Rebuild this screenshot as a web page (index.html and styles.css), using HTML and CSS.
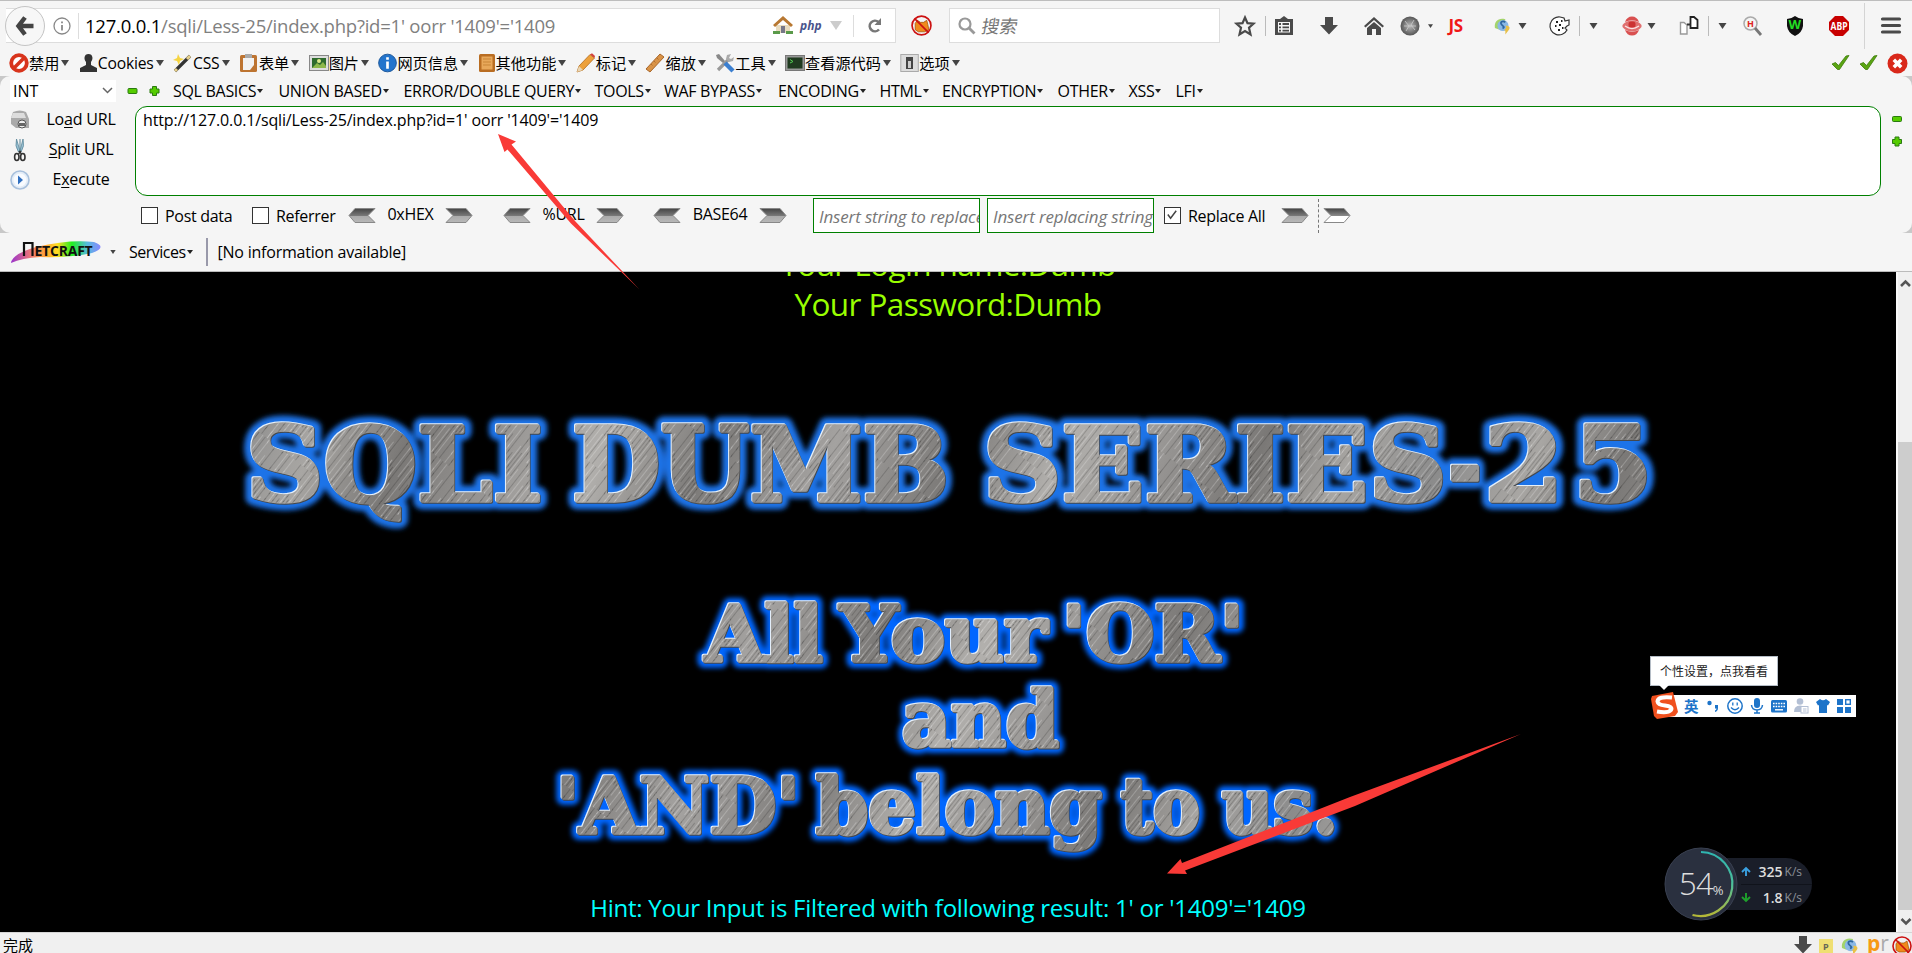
FILE: index.html
```
<!DOCTYPE html>
<html lang="zh-CN">
<head>
<meta charset="utf-8">
<title>Less-25</title>
<link rel="stylesheet" href="styles.css">
</head>
<body>
<svg class="defs" width="0" height="0">
  <defs>
    <linearGradient id="gArrow" x1="0" y1="0" x2="0" y2="1"><stop offset="0" stop-color="#444"/><stop offset=".5" stop-color="#777"/><stop offset=".55" stop-color="#aaa"/><stop offset="1" stop-color="#b8b8b8"/></linearGradient>
    <linearGradient id="gArrowW" x1="0" y1="0" x2="0" y2="1"><stop offset="0" stop-color="#444"/><stop offset=".5" stop-color="#888"/><stop offset=".55" stop-color="#fff"/><stop offset="1" stop-color="#fff"/></linearGradient>
    <radialGradient id="gBall"><stop offset="0" stop-color="#bbb"/><stop offset="1" stop-color="#555"/></radialGradient>
    <symbol id="right" viewBox="0 0 28 15"><path d="M1 .5H21L27 7.5L21 14.500H1L8 7.500Z" fill="url(#gArrow)" stroke="#888"/></symbol>
    <symbol id="left" viewBox="0 0 28 15"><path d="M27 .5H7L1 7.500L7 14.500H27L20 7.500Z" fill="url(#gArrow)" stroke="#888"/></symbol>
    <symbol id="rightw" viewBox="0 0 28 15"><path d="M1 .5H21L27 7.500L21 14.500H1L8 7.500Z" fill="url(#gArrowW)" stroke="#888"/></symbol>
    <symbol id="minus" viewBox="0 0 10 10"><rect x=".5" y="2.500" width="9" height="5" rx="1" fill="#5c0" stroke="#2a7a10"/></symbol>
    <symbol id="plus" viewBox="0 0 10 10"><path d="M3 .5H7V3H9.500V7H7V9.500H3V7H.5V3H3Z" fill="#5c0" stroke="#2a7a10"/></symbol>
    <symbol id="tri" viewBox="0 0 8 6"><path d="M0 0H8L4 6Z" fill="#444"/></symbol>
    <symbol id="tick" viewBox="0 0 18 18"><path d="M.5 10L4 8.500L7 11.500L14.500 2L17.500 1.500L8 15.500H6Z" fill="#5aa512" stroke="#3c7a0a" stroke-width=".8"/></symbol>
    <symbol id="fox" viewBox="0 0 20 20"><path d="M4 8L6 5L9 7H12L15 5L16 9L17 14L13 16H7L4 14Z" fill="#f08a1c" stroke="#a05008" stroke-width=".7"/><circle cx="10" cy="10" r="9" fill="none" stroke="#c11" stroke-width="1.600"/><path d="M3.500 3.500L16.500 16.500" stroke="#c11" stroke-width="1.600"/></symbol>
    <symbol id="swirl" viewBox="0 0 20 20"><path d="M2 12C1 5 6 1 13 3L12 8L8 6C5 8 5 11 7 14Z" fill="#a4d46c"/><circle cx="10.500" cy="9.500" r="5.800" fill="#8ab8e6"/><path d="M13 6C10 4 7 6 9 8.500S13 11 10 12.500" fill="none" stroke="#2f679f" stroke-width="1.800"/><path d="M13 10C17 9 19 12 16 15L13 19V15C10 14 16 13 13 10Z" fill="#e8c048"/></symbol>
    <symbol id="down" viewBox="0 0 18 18"><path d="M5 0H13V8H18L9 17.500L0 8H5Z" fill="#4a4a4a"/></symbol>
    <linearGradient id="metal" gradientUnits="userSpaceOnUse" x1="240" y1="400" x2="760" y2="620" spreadMethod="reflect"><stop offset="0" stop-color="#8b8b8b"/><stop offset=".15" stop-color="#a8a6a3"/><stop offset=".3" stop-color="#7a7876"/><stop offset=".48" stop-color="#9b9997"/><stop offset=".62" stop-color="#b2b0ad"/><stop offset=".8" stop-color="#7d7b79"/><stop offset="1" stop-color="#a4a2a0"/></linearGradient>
    <pattern id="brush" width="90" height="31" patternUnits="userSpaceOnUse" patternTransform="rotate(-52)">
      <path d="M0 2.500H60M20 9.500H90M0 14.500H40M50 17.500H90M10 23.500H75M0 28.500H30" stroke="#fff" stroke-opacity=".22"/>
      <path d="M30 4.500H90M0 7.500H55M30 12.500H90M0 19.500H65M40 26.500H90M0 30.500H50" stroke="#000" stroke-opacity=".17"/>
    </pattern>
    <filter id="glow" x="-5%" y="-15%" width="110%" height="130%"><feGaussianBlur stdDeviation="2.600"/></filter>
  </defs>
</svg>

<header class="nav">
  <div class="urlbar">
    <button class="back"><svg width="18" height="20" viewBox="0 0 18 20"><path d="M9 1.500L2.500 10L9 18.500M3 10H17.500" fill="none" stroke="#444" stroke-width="4.500"/></svg></button>
    <svg class="info" width="18" height="18" viewBox="0 0 18 18"><circle cx="9" cy="9" r="8" fill="none" stroke="#888" stroke-width="1.300"/><path d="M9 8V13.500M9 4.500V6.200" stroke="#888" stroke-width="1.800"/></svg>
    <div class="url"><b>127.0.0.1</b>/sqli/Less-25/index.php?id=1' oorr '1409'='1409</div>
    <svg width="20" height="19" viewBox="0 0 20 19"><path d="M3 9H17V17H3Z" fill="#e9dcc0"/><path d="M0 9L10 0L20 9L18 11L10 4L2 11Z" fill="#b87832"/><rect x="8" y="10" width="4" height="7" fill="#778"/><path d="M0 15H7V18H0ZM13 15H20V18H13Z" fill="#5a9a4a"/></svg>
    <span class="php">php</span>
    <svg class="drop" width="12" height="9" viewBox="0 0 12 9"><path d="M0 0H12L6 9Z" fill="#ccc"/></svg>
    <span class="reload"><svg width="15" height="16" viewBox="0 0 15 16"><path d="M11.500 4A5.300 5.300 0 1 0 12 11.500" fill="none" stroke="#777" stroke-width="2.600"/><path d="M14 0V7H7.500Z" fill="#777"/></svg></span>
  </div>
  <svg class="fox" width="21" height="21"><use href="#fox"/></svg>
  <div class="search"><svg width="18" height="18" viewBox="0 0 18 18"><circle cx="7" cy="7" r="5.500" fill="none" stroke="#999" stroke-width="2.200"/><path d="M11 11L16.500 16.500" stroke="#999" stroke-width="2.800"/></svg><i>搜索</i></div>
  <div class="tools">
    <svg width="22" height="22" viewBox="0 0 22 22"><path d="M11 2.500L13.500 8.200L19.500 8.700L15 12.700L16.500 19.500L11 16L5.500 19.500L7 12.700L2.500 8.700L8.500 8.200Z" fill="none" stroke="#4a4a4a" stroke-width="2.200"/></svg>
    <span class="vline m9"></span>
    <svg class="m8" width="20" height="20" viewBox="0 0 20 20"><path d="M1 3H6L10 0L14 3H19V19H1Z" fill="#4a4a4a"/><path d="M4 6H16V16.500H4Z" fill="#f5f5f5"/><path d="M5 8H7M8.500 8H15M5 11.300H7M8.500 11.300H15M5 14.600H7M8.500 14.600H15" stroke="#4a4a4a" stroke-width="1.800"/></svg>
    <svg class="m26" width="18" height="18"><use href="#down"/></svg>
    <svg class="m26" width="20" height="18" viewBox="0 0 20 18"><path d="M0 9L10 0L20 9L18.500 10.500L10 3L1.500 10.500Z" fill="#4a4a4a"/><path d="M3 11L10 5L17 11V18H12V12H8V18H3Z" fill="#4a4a4a"/></svg>
    <svg class="m16" width="20" height="20" viewBox="0 0 20 20"><circle cx="10" cy="10" r="9.500" fill="url(#gBall)"/><path d="M5 5L9 10L6 15M14 4L11 9L15 14M4 10H16" stroke="#ccc" stroke-width=".8" fill="none"/></svg>
    <svg class="m7" width="5" height="4"><use href="#tri"/></svg>
    <b class="js m16">JS</b>
    <svg class="m24" width="19" height="20"><use href="#swirl"/></svg>
    <svg class="m6" width="9" height="6"><use href="#tri"/></svg>
    <svg class="m23" width="20" height="20" viewBox="0 0 20 20"><path d="M10 1A9 9 0 1 0 17 14L15 12L17 10L19 9V4L15 5L14 2Z" fill="#fff" stroke="#333" stroke-width="1.200"/><path d="M6 6H8M11 5H12.500M5 10H6.500M9 9H11M12 12H13.500M8 14H10" stroke="#222" stroke-width="2"/></svg>
    <span class="vline m9"></span>
    <svg class="m9" width="9" height="6"><use href="#tri"/></svg>
    <svg class="m24" width="20" height="20" viewBox="0 0 20 20"><path d="M3 6Q5 .5 10 .5T17 6Q10 2.500 3 6ZM3 14Q5 19.500 10 19.500T17 14Q10 17.500 3 14Z" fill="#d95050"/><path d="M.5 9Q4 4.500 10 4.500T19.500 9V11Q16 15.500 10 15.500T.5 11Z" fill="#e07070"/><path d="M3 10Q10 15 17 10" fill="none" stroke="#fbe4e4" stroke-width="1.300"/><rect x="6.500" y="5.500" width="7" height="6" rx="2.500" fill="#c33"/></svg>
    <svg class="m5" width="9" height="6"><use href="#tri"/></svg>
    <svg class="m23" width="20" height="19" viewBox="0 0 20 19"><path d="M1.500 6.500H5L8 9V18H1.500Z" fill="#fff" stroke="#999" stroke-width="1.400"/><path d="M11.500 1H15L18.500 4V12H11.500Z" fill="#fff" stroke="#222" stroke-width="1.800"/><path d="M8 8.500H11.500" stroke="#333" stroke-width="2"/></svg>
    <span class="vline m9"></span>
    <svg class="m9" width="9" height="6"><use href="#tri"/></svg>
    <svg class="m16" width="19" height="20" viewBox="0 0 19 20"><circle cx="7.500" cy="7.500" r="6.500" fill="#f4f4f4" stroke="#aaa" stroke-width="1.500"/><path d="M12 12L18 19" stroke="#777" stroke-width="2.800"/><text x="4" y="11" class="hh">H</text></svg>
    <svg class="m24" width="18" height="20" viewBox="0 0 18 20"><path d="M1 3Q5 3 9 0Q13 3 17 3V10Q16 17 9 20Q2 17 1 10Z" fill="#111"/><text x="2.500" y="13" class="ww">W</text></svg>
    <svg class="m25" width="20" height="20" viewBox="0 0 20 20"><path d="M6 0H14L20 6V14L14 20H6L0 14V6Z" fill="#c80000"/><text x="1.500" y="13.800" class="abp" textLength="17" lengthAdjust="spacingAndGlyphs">ABP</text></svg>
    <span class="vlong m15"></span>
    <svg class="m16" width="20" height="17" viewBox="0 0 20 17"><path d="M1.500 2H18.500M1.500 8.500H18.500M1.500 15H18.500" stroke="#4a4a4a" stroke-width="3.200" stroke-linecap="round"/></svg>
  </div>
</header>

<div class="webdev">
  <div class="wd"><svg width="20" height="20" viewBox="0 0 20 20"><circle cx="10" cy="10" r="7.800" fill="#fff" stroke="#d8341c" stroke-width="3.800"/><path d="M4.500 15.500L15.500 4.500" stroke="#d8341c" stroke-width="3.500"/></svg><span>禁用</span><svg class="t"><use href="#tri"/></svg></div>
  <div class="wd"><svg width="19" height="20" viewBox="0 0 19 20"><path d="M9.500 1C14 1 14.500 6 12 9V12L18 15V19H1V15L7 12V9C4.500 6 5 1 9.500 1Z" fill="#333"/></svg><span class="lat">Cookies</span><svg class="t"><use href="#tri"/></svg></div>
  <div class="wd"><svg width="20" height="20" viewBox="0 0 20 20"><path d="M5 1L7 5L11 6L7 8L6 12L4 8L0 7L4 5Z" fill="#f5d442"/><path d="M2 18L17 3" stroke="#333" stroke-width="3.200"/><path d="M14 6L17 3M2 18L4 16" stroke="#e6cf8a" stroke-width="3"/></svg><span class="lat">CSS</span><svg class="t"><use href="#tri"/></svg></div>
  <div class="wd"><svg width="20" height="20" viewBox="0 0 20 20"><rect x="1" y="2" width="17" height="17" rx="1.500" fill="#bd7431"/><path d="M4 5H15V12L11 17H4Z" fill="#f2f2f2"/><rect x="6" y="1" width="7" height="4" fill="#aaa"/></svg><span>表单</span><svg class="t"><use href="#tri"/></svg></div>
  <div class="wd"><svg width="20" height="20" viewBox="0 0 20 20"><rect x=".5" y="2.500" width="19" height="15" fill="#ddd" stroke="#888"/><rect x="3" y="5" width="14" height="10" fill="#2e6b2d"/><path d="M3 15L8 10L11 12L14 9L17 13V15Z" fill="#8db84a"/><circle cx="10" cy="8" r="2" fill="#dce88a"/></svg><span>图片</span><svg class="t"><use href="#tri"/></svg></div>
  <div class="wd"><svg width="19" height="20" viewBox="0 0 20 20"><circle cx="10" cy="10" r="9.300" fill="#2374cc" stroke="#1a5599"/><path d="M10 8.500V16M10 4V6.600" stroke="#fff" stroke-width="2.800"/></svg><span>网页信息</span><svg class="t"><use href="#tri"/></svg></div>
  <div class="wd"><svg width="18" height="20" viewBox="0 0 18 20"><rect x="1" y="1" width="16" height="18" rx="1.500" fill="#b96d22"/><rect x="3.500" y="3.500" width="11" height="13" fill="#e8a85a"/><path d="M5 6H13M5 9H13M5 12H13" stroke="#c98536"/></svg><span>其他功能</span><svg class="t"><use href="#tri"/></svg></div>
  <div class="wd"><svg width="20" height="20" viewBox="0 0 20 20"><path d="M1 19L3 13L14 1.500L18.500 5L7 17Z" fill="#eda13c" stroke="#b36b1d" stroke-width=".8"/><path d="M14 1.500L16 .3L19 3L18.500 5Z" fill="#d3423e"/><path d="M1 19L3 13L7 17Z" fill="#e9d6b4"/></svg><span>标记</span><svg class="t"><use href="#tri"/></svg></div>
  <div class="wd"><svg width="20" height="20" viewBox="0 0 20 20"><path d="M1 16L15 1L19 4L5 19Z" fill="#d99347" stroke="#a8662a"/><path d="M6 11L7.500 12.500M9 8L10.500 9.500M12 5L13.500 6.500" stroke="#a8662a" stroke-width=".8"/></svg><span>缩放</span><svg class="t"><use href="#tri"/></svg></div>
  <div class="wd"><svg width="20" height="20" viewBox="0 0 20 20"><path d="M3 17L14 6" stroke="#999" stroke-width="3.200"/><path d="M12 2L16 1L14 5L16 6L19 4L18 8L14 9L11 6Z" fill="#aaa"/><path d="M1 2L4 1L10 8L8 10L2 5Z" fill="#888"/><path d="M10 10L18 18" stroke="#3b7fd0" stroke-width="4.500"/></svg><span>工具</span><svg class="t"><use href="#tri"/></svg></div>
  <div class="wd"><svg width="20" height="20" viewBox="0 0 20 20"><rect x=".5" y="2.500" width="19" height="15" fill="#999" stroke="#777"/><rect x="2.500" y="4.500" width="15" height="11" fill="#1f3a1f"/><path d="M5 6.500L8 8.500L5 10" stroke="#5c5" fill="none"/></svg><span>查看源代码</span><svg class="t"><use href="#tri"/></svg></div>
  <div class="wd"><svg width="19" height="20" viewBox="0 0 19 20"><rect x=".8" y="1.500" width="17.500" height="17" fill="#ddd" stroke="#aaa"/><rect x="6" y="4" width="7" height="12" fill="#444"/><path d="M8 15V8H11V15Z" fill="#ccc"/></svg><span>选项</span><svg class="t"><use href="#tri"/></svg></div>
  <div class="marks"><svg width="19" height="18"><use href="#tick"/></svg><svg width="19" height="18"><use href="#tick"/></svg><svg width="21" height="21" viewBox="0 0 20 20"><circle cx="10" cy="10" r="9.500" fill="#d9281a"/><path d="M6.500 6.500L13.500 13.500M13.500 6.500L6.500 13.500" stroke="#fff" stroke-width="3.400"/></svg></div>
</div>

<div class="hackwrap">
<section class="hackbar">
  <div class="hmenu">
    <div class="sel"><span>INT</span><svg width="11" height="7" viewBox="0 0 11 7"><path d="M1 1L5.500 5.500L10 1" fill="none" stroke="#666" stroke-width="1.500"/></svg></div>
    <svg width="11" height="10"><use href="#minus"/></svg>
    <svg width="11" height="10"><use href="#plus"/></svg>
    <ul>
      <li>SQL BASICS</li><li>UNION BASED</li><li>ERROR/DOUBLE QUERY</li><li>TOOLS</li><li>WAF BYPASS</li><li>ENCODING</li><li>HTML</li><li>ENCRYPTION</li><li>OTHER</li><li>XSS</li><li>LFI</li>
    </ul>
  </div>
  <div class="hbody">
    <div class="acts">
      <div><svg width="20" height="20" viewBox="0 0 20 20"><path d="M3 2Q10 -1 16 2L19 9V18H6L1 14V8Z" fill="#aaa"/><path d="M3 3H14L16 8H1Z" fill="#ddd"/><circle cx="12" cy="14" r="4" fill="#eee" stroke="#555"/><path d="M9 13H15V16H9Z" fill="#666"/></svg><span>Lo<u>a</u>d URL</span></div>
      <div><svg width="20" height="24" viewBox="0 0 20 24"><path d="M6.500 1Q4.500 8 8.500 14H11Q15 8 13 1L10 13Z" fill="#9cc3d6" stroke="#5b8799" stroke-width=".8"/><path d="M10 1V14" stroke="#5b8799"/><ellipse cx="6.800" cy="19" rx="2.200" ry="3.500" fill="none" stroke="#333" stroke-width="1.600"/><ellipse cx="12.800" cy="19" rx="2.200" ry="3.500" fill="none" stroke="#333" stroke-width="1.600"/><path d="M8.500 16L11 13M11.500 16L9 13" stroke="#333" stroke-width="1.400"/></svg><span><u>S</u>plit URL</span></div>
      <div><svg width="20" height="20" viewBox="0 0 20 20"><circle cx="10" cy="10" r="9" fill="#e4edf7" stroke="#a8c0dc" stroke-width="1.600"/><circle cx="10" cy="10" r="6.500" fill="#f8fbff"/><path d="M8 5.500L13 10L8 14.500Z" fill="#2f6fc0"/></svg><span>E<u>x</u>ecute</span></div>
    </div>
    <div class="area">http://127.0.0.1/sqli/Less-25/index.php?id=1' oorr '1409'='1409</div>
    <div class="pm"><svg width="10" height="10"><use href="#minus"/></svg><svg width="10" height="11"><use href="#plus"/></svg></div>
  </div>
  <div class="hopts">
    <span class="cb"></span><span class="o1">Post data</span>
    <span class="cb"></span><span class="o2">Referrer</span>
    <svg class="ar"><use href="#left"/></svg><span class="o3 up">0xHEX</span><svg class="ar"><use href="#right"/></svg>
    <svg class="ar g30"><use href="#left"/></svg><span class="o4 up">%URL</span><svg class="ar"><use href="#right"/></svg>
    <svg class="ar g29"><use href="#left"/></svg><span class="o5 up">BASE64</span><svg class="ar"><use href="#right"/></svg>
    <span class="inp g26">Insert string to replace</span><span class="inp g7">Insert replacing string</span>
    <span class="cb g10"><svg width="14" height="14" viewBox="0 0 15 15"><path d="M3 7L6 11L12 3" fill="none" stroke="#444" stroke-width="1.600"/></svg></span><span class="o6">Replace All</span>
    <svg class="ar"><use href="#right"/></svg><span class="dash"></span><svg class="ar"><use href="#rightw"/></svg>
  </div>
</section>
</div>

<div class="netcraft">
  <svg width="94" height="24" viewBox="0 0 94 24"><defs><linearGradient id="rb"><stop offset="0" stop-color="#93c"/><stop offset=".22" stop-color="#e77"/><stop offset=".4" stop-color="#fa3"/><stop offset=".52" stop-color="#fd2"/><stop offset=".68" stop-color="#2e2"/><stop offset=".85" stop-color="#5bd"/><stop offset="1" stop-color="#88f"/></linearGradient></defs><path d="M1 23Q2 14 26 7Q60 -1 84 2Q98 7 82 13Q60 18 30 17Q12 18 1 23Z" fill="url(#rb)"/><path d="M14 16V3H22.500V16" fill="none" stroke="#111" stroke-width="2.200"/><text x="24.500" y="16" class="nc" textLength="58" lengthAdjust="spacingAndGlyphs">ETCRAFT</text></svg>
  <svg class="nt" width="6" height="4"><use href="#tri"/></svg>
  <span class="svc">Services</span>
  <span class="nline"></span>
  <span class="noinfo">[No information available]</span>
</div>

<main class="view">
  <div class="page">
    <p class="cred login">Your Login name:Dumb</p>
    <p class="cred">Your Password:Dumb</p>
    <svg class="banner" width="1896" height="550" viewBox="0 342 1896 550">
      <defs>
        <g id="big">
          <text x="246" y="500" textLength="297" lengthAdjust="spacingAndGlyphs">SQLI</text>
          <text x="572" y="500" textLength="377" lengthAdjust="spacingAndGlyphs">DUMB</text>
          <text x="983" y="500" textLength="464" lengthAdjust="spacingAndGlyphs">SERIES</text>
          <text x="1448" y="500" textLength="34" lengthAdjust="spacingAndGlyphs">-</text>
          <text x="1484" y="500" textLength="80" lengthAdjust="spacingAndGlyphs">2</text>
          <text x="1573" y="500" textLength="80" lengthAdjust="spacingAndGlyphs">5</text>
        </g>
        <g id="small">
          <text x="705" y="660" textLength="118" lengthAdjust="spacingAndGlyphs">All</text>
          <text x="840" y="660" textLength="207" lengthAdjust="spacingAndGlyphs">Your</text>
          <text x="1062" y="660" textLength="182" lengthAdjust="spacingAndGlyphs">'OR'</text>
          <text x="902" y="745" textLength="157" lengthAdjust="spacingAndGlyphs">and</text>
          <text x="556" y="832" textLength="244" lengthAdjust="spacingAndGlyphs">'AND'</text>
          <text x="816" y="832" textLength="286" lengthAdjust="spacingAndGlyphs">belong</text>
          <text x="1121" y="832" textLength="79" lengthAdjust="spacingAndGlyphs">to</text>
          <text x="1222" y="832" textLength="116" lengthAdjust="spacingAndGlyphs">us.</text>
        </g>
      </defs>
      <g class="slab big">
        <use href="#big" class="halo h1"/><use href="#big" class="lite" x="-1" y="-1.200"/><use href="#big" class="dark" x=".8" y=".8"/><use href="#big" class="face"/><use href="#big" class="grain"/>
      </g>
      <g class="slab small">
        <use href="#small" class="halo h2"/><use href="#small" class="lite" x="-1" y="-1"/><use href="#small" class="dark" x=".8" y=".8"/><use href="#small" class="face"/><use href="#small" class="grain"/>
      </g>
    </svg>
    <p class="hint">Hint: Your Input is Filtered with following result: 1' or '1409'='1409</p>
  </div>
  <div class="scroll">
    <svg width="14" height="20" viewBox="0 0 14 20"><path d="M3 14L7.500 9.500L12 14" fill="none" stroke="#555" stroke-width="2.600"/></svg>
    <div class="thumb"></div>
    <svg width="14" height="22" viewBox="0 0 14 22"><path d="M3.500 9L8 13.500L12.500 9" fill="none" stroke="#555" stroke-width="2.600"/></svg>
  </div>
</main>

<footer class="status">
  <span>完成</span>
  <div class="sicons">
    <svg width="18" height="18"><use href="#down"/></svg>
    <svg class="note" width="14" height="15" viewBox="0 0 14 15"><rect width="14" height="15" fill="#efdf72"/><text x="4" y="11" class="pp">P</text></svg>
    <svg width="20" height="20"><use href="#swirl"/></svg>
    <span class="pr">p<em>r</em></span>
    <svg width="20" height="20"><use href="#fox"/></svg>
  </div>
</footer>

<svg class="marker" width="1912" height="953" viewBox="0 0 1912 953">
  <path d="M498 134L516 141.500L511.500 144.500L575 221L639 289L571 223.500L507.500 149.500L504.500 152Z" fill="#f93a37"/>
  <path d="M1167 873.500L1180.500 859L1182 863L1350 797L1521 734L1355 806L1185 870.500L1187 874Z" fill="#f93a37"/>
</svg>

<div class="tip">个性设置，点我看看</div>
<div class="ime">
  <svg class="slogo" width="29" height="29" viewBox="0 0 29 29"><path d="M2 5L23 1L28 21L25 25L7 28L4 25L1 8Z" fill="#f0501e"/><path d="M22 6.500Q8 5 7.500 10.500Q8 14 15 14.500Q23 15.500 21 19Q18 22.500 7 20.500" fill="none" stroke="#fff" stroke-width="4"/></svg>
  <b>英</b>
  <svg width="14" height="16" viewBox="0 0 14 16"><circle cx="3.500" cy="5" r="2.200" fill="#1d74c9"/><path d="M9 7H12V10Q12 13 9 14V12.500Q10.500 12 10.500 10.500H9Z" fill="#1d74c9"/></svg>
  <svg width="16" height="16" viewBox="0 0 16 16"><circle cx="8" cy="8" r="7.200" fill="none" stroke="#1d74c9" stroke-width="1.500"/><path d="M5.800 4.500V7.500M10.200 4.500V7.500M4 9.500Q8 14 12 9.500" fill="none" stroke="#1d74c9" stroke-width="1.300"/></svg>
  <svg width="14" height="16" viewBox="0 0 14 16"><rect x="4" y="0" width="6" height="10" rx="3" fill="#1d74c9"/><path d="M1.500 7Q2 12 7 12T12.500 7M7 12V15M4 15H10" fill="none" stroke="#1d74c9" stroke-width="1.500"/></svg>
  <svg width="16" height="13" viewBox="0 0 16 13"><rect width="16" height="12.500" rx="1.500" fill="#1d74c9"/><path d="M2 3.500H14M2 6.500H14" stroke="#fff" stroke-width="1.400" stroke-dasharray="1.600 1"/><path d="M4 9.800H12" stroke="#fff" stroke-width="1.400"/></svg>
  <svg width="15" height="16" viewBox="0 0 15 16"><circle cx="6" cy="3.500" r="3.300" fill="#b3bfd4"/><path d="M0 14Q0 7.500 6 7.500T11 14Z" fill="#b3bfd4"/><rect x="7" y="8.500" width="7" height="6.500" fill="#fff" stroke="#b3bfd4"/><path d="M9 11H12.500M9 13H12.500" stroke="#b3bfd4"/></svg>
  <svg width="14" height="14" viewBox="0 0 14 14"><path d="M4 0Q7 2.500 10 0L14 3L12 6.500L11 6V14H3V6L2 6.500L0 3Z" fill="#1d74c9"/></svg>
  <svg width="14" height="14" viewBox="0 0 14 14"><path d="M0 0H6V6H0ZM0 8H6V14H0ZM8 8H14V14H8Z" fill="#1d74c9"/><rect x="8.700" y=".7" width="4.600" height="4.600" fill="none" stroke="#1d74c9" stroke-width="1.400"/></svg>
</div>

<div class="meter">
  <div class="rates">
    <div><svg width="10" height="9" viewBox="0 0 10 9"><path d="M5 9V2M1 5L5 1L9 5" fill="none" stroke="#3aa0e0" stroke-width="1.900"/></svg><b>325</b><i>K/s</i></div>
    <div><svg width="10" height="9" viewBox="0 0 10 9"><path d="M5 0V7M1 4L5 8L9 4" fill="none" stroke="#1ea02c" stroke-width="1.900"/></svg><b>1.8</b><i>K/s</i></div>
  </div>
  <div class="dial">
    <svg width="74" height="74" viewBox="0 0 74 74"><defs><linearGradient id="ring" x1="0" y1="0" x2="0" y2="1"><stop offset="0" stop-color="#2fb5b0"/><stop offset=".5" stop-color="#4cc09c"/><stop offset="1" stop-color="#b5b837"/></linearGradient></defs><circle cx="37" cy="37" r="36" fill="#2a303f" stroke="#3a4152"/><path d="M37 5A32 32 0 1 1 28.500 68" fill="none" stroke="url(#ring)" stroke-width="2.200"/></svg>
    <span class="pct">54<small>%</small></span>
  </div>
</div>
</body>
</html>
```

FILE: styles.css
```
* { box-sizing: border-box; }
body {
  margin: 0; width: 1912px; height: 953px; overflow: hidden; position: relative;
  display: flex; flex-direction: column; background: #f5f5f5; color: #000;
  font: 16px "Open Sans", "Noto Sans CJK SC", sans-serif;
}
svg { display: block; flex: none; overflow: visible; }
.defs { position: absolute; }
p, ul { margin: 0; padding: 0; }

.nav { height: 50px; flex: none; display: flex; align-items: center; border-top: 1px solid #bdbdbd; padding: 0 0 0 6px; }
.urlbar { width: 890px; height: 35px; background: #fff; border: 1px solid #ddd; display: flex; align-items: center; border-left: 0; }
.back { width: 40px; height: 40px; flex: none; border: 1px solid #c4c4c4; border-radius: 50%; background: #f7f7f7; padding: 0; display: flex; align-items: center; justify-content: center; margin-left: -1px; }
.info { margin-left: 8px; }
.url { margin-left: 7px; padding-left: 6px; border-left: 1px solid #ddd; height: 26px; line-height: 25px; font-size: 18.500px; color: #808080; width: 695px; white-space: nowrap; letter-spacing: -.22px; }
.url b { font-weight: 400; color: #000; }
.php { font: italic bold 12px "Open Sans", sans-serif; color: #4a548c; margin-left: 7px; width: 30px; }
.drop { flex: none; }
.reload { border-left: 1px solid #ddd; margin-left: 11px; padding-left: 13px; height: 22px; display: flex; align-items: center; }
.fox { margin-left: 15px; }
.search { margin-left: 17px; width: 271px; height: 35px; background: #fff; border: 1px solid #ddd; display: flex; align-items: center; gap: 7px; padding-left: 8px; color: #777; font-size: 18px; }
.search i { transform: skewX(-10deg); font-style: normal; position: relative; top: -1px; left: -1px; }
.tools { flex: 1; display: flex; align-items: center; height: 49px; padding-left: 14px; }
.m5 { margin-left: 5px; } .m6 { margin-left: 6px; } .m7 { margin-left: 7.500px; } .m8 { margin-left: 8px; } .m9 { margin-left: 9px; }
.m15 { margin-left: 15px; } .m16 { margin-left: 16px; } .m23 { margin-left: 23px; } .m24 { margin-left: 24px; } .m25 { margin-left: 25px; } .m26 { margin-left: 26px; }
.vline { width: 1px; height: 20px; background: #bbb; flex: none; }
.vlong { width: 1px; height: 46px; background: #d4d4d4; flex: none; }
.js { color: #f01818; font: bold 17px/20px "Open Sans"; width: 20px; flex: none; letter-spacing: -.3px; }
.hh { font: bold 9px "Open Sans"; fill: #d22; }
.ww { font: bold 13px "Open Sans"; fill: #2d2; }
.abp { font: bold 10px "Open Sans"; fill: #fff; }

.webdev { height: 26px; flex: none; display: flex; align-items: center; padding-left: 9px; gap: 9.400px; }
.wd { display: flex; align-items: center; font-size: 15.200px; line-height: 24px; white-space: nowrap; }
.wd .t { width: 8px; height: 6px; margin-left: 2px; }
.lat { letter-spacing: -.2px; font-size: 15.700px; }
.marks { margin-left: auto; display: flex; align-items: center; gap: 9px; padding-right: 4px; }

.hackwrap { height: 157px; flex: none; background: #c8c8c8; }
.hackbar { height: 157px; background: #f5f5f5; border-radius: 10px; display: flex; flex-direction: column; }
.hmenu { height: 30px; display: flex; align-items: center; padding: 0 0 1px 10px; }
.sel { width: 106px; height: 22px; background: #fff; display: flex; align-items: center; justify-content: space-between; padding: 0 3px; margin-right: 11px; line-height: 20px; }
.hmenu > svg { margin-right: 10.500px; }
.hmenu ul { list-style: none; display: grid; grid-template-columns: 105.500px 125px 191px 69.500px 114px 101.500px 62.500px 115.500px 71px 47px 40px; letter-spacing: -.3px; white-space: nowrap; margin-left: 3px; line-height: 22px; }
.hmenu li::after, .svc::after { content: ""; display: inline-block; border: 3px solid transparent; border-top: 4px solid #222; border-bottom: 0; vertical-align: 4px; margin-left: 1px; }
.hbody { height: 90px; display: flex; }
.acts { width: 135px; padding-left: 10px; display: flex; flex-direction: column; justify-content: space-between; }
.acts > div { display: flex; align-items: center; height: 30px; }
.acts svg { position: relative; top: -1px; }
.acts span { width: 102px; text-align: center; letter-spacing: -.2px; position: relative; top: -2px; }
.acts u { text-underline-offset: 2px; }
.area { width: 1746px; height: 90px; background: #fff; border: 1px solid #008000; border-radius: 12px; padding: 2px 7px; letter-spacing: -.14px; line-height: 22px; }
.pm { padding: 8px 0 0 11px; display: flex; flex-direction: column; gap: 12px; }
.hopts { display: flex; align-items: center; height: 37px; padding: 2px 0 0 141px; white-space: nowrap; letter-spacing: -.3px; }
.cb { width: 17px; height: 17px; flex: none; background: #fff; border: 1.500px solid #333; }
.hopts .up { position: relative; top: -2px; }
.o1 { width: 87px; padding-left: 7px; margin-right: 7px; }
.o2 { width: 79px; padding-left: 7px; }
.ar { width: 28px; height: 15px; }
.o3 { width: 69px; text-align: center; }
.o4 { width: 65px; text-align: center; }
.o5 { width: 78px; text-align: center; }
.g30 { margin-left: 30px; } .g29 { margin-left: 29px; }
.g26 { margin-left: 26px; } .g7 { margin-left: 7px; } .g10 { margin-left: 10px; }
.inp { width: 167px; height: 35px; flex: none; border: 1px solid #008000; background: #fff; color: #777; font-style: italic; font-size: 17px; letter-spacing: -.15px; line-height: 35px; padding: 0 0 0 5px; overflow: hidden; }
.o6 { width: 100px; padding-left: 7px; }
.dash { height: 34px; border-left: 1px dashed #777; margin: 0 4px 0 9px; }

.netcraft { height: 39px; flex: none; border-bottom: 1px solid #bbb; display: flex; align-items: center; padding-left: 10px; letter-spacing: -.22px; }
.nc { font: bold 14.500px "Open Sans"; fill: #111; }
.nt { margin-left: 6px; }
.svc { margin-left: 13px; width: 77px; white-space: nowrap; letter-spacing: -.5px; }
.nline { width: 1.500px; height: 28px; background: #99a; margin-right: 10px; }

.view { height: 660px; flex: none; display: flex; }
.page { width: 1896px; background: #000; overflow: hidden; display: flex; flex-direction: column; align-items: center; }
.cred { color: #99ff00; font-size: 31.500px; line-height: 40px; height: 40px; letter-spacing: -.6px; flex: none; white-space: nowrap; }
.login { margin-top: -28px; }
.banner { margin-top: 19px; }
.hint { color: #00ffff; font-size: 24px; line-height: 32px; letter-spacing: -.23px; margin-top: -1px; white-space: nowrap; }
.slab { font-family: "DejaVu Serif", serif; font-weight: bold; stroke-linejoin: round; }
.slab.big { font-size: 102px; }
.slab.small { font-size: 76px; }
.halo { filter: url(#glow); }
.h1 { fill: #1f73e8; stroke: #1f73e8; stroke-width: 17px; }
.h2 { fill: #0066ff; stroke: #0066ff; stroke-width: 14px; }
.lite { fill: #e6f0fa; stroke: #e6f0fa; stroke-width: 3.500px; }
.dark { fill: #45484c; stroke: #45484c; stroke-width: 3.500px; }
.face { fill: url(#metal); stroke: url(#metal); stroke-width: 3.500px; }
.grain { fill: url(#brush); stroke: url(#brush); stroke-width: 3px; }
.scroll { width: 16px; background: #f0f0f0; border-left: 2px solid #fafafa; display: flex; flex-direction: column; align-items: center; }
.thumb { width: 14px; height: 468px; margin-top: auto; background: #cdcdcd; }

.status { height: 21px; background: #f0f0f0; border-top: 1px solid #d5d5d5; display: flex; justify-content: space-between; font-size: 15px; line-height: 25px; padding-left: 3px; overflow: hidden; }
.sicons { display: flex; align-items: flex-start; gap: 7px; padding-top: 3px; }
.note { margin-top: 3px; }
.pr { font: bold 21px/14px "Open Sans"; color: #f79a14; width: 18px; }
.pr em { color: #aaa; font-style: normal; font-weight: 400; }
.pp { font: bold 9px "Open Sans"; fill: #665; }

.marker { position: absolute; left: 0; top: 0; }
.tip { position: absolute; left: 1650px; top: 656px; width: 128px; height: 30px; background: #fff; border: 1px solid #b5bdc6; font: 12px/28px "Noto Sans CJK SC", sans-serif; color: #222; padding-left: 9px; white-space: nowrap; }
.tip::after { content: ""; position: absolute; left: 8px; top: 28px; border: 5px solid transparent; border-top-color: #fff; border-bottom: 0; }
.ime { position: absolute; left: 1664px; top: 695px; width: 192px; height: 22px; background: #fff; display: flex; align-items: center; justify-content: space-between; padding: 0 5px 0 20px; }
.ime b { color: #1d74c9; font: bold 14.500px/20px "Noto Sans CJK SC", sans-serif; }
.slogo { position: absolute; left: -14px; top: -4px; }
.meter { position: absolute; left: 1664px; top: 847px; }
.rates { position: absolute; left: 37px; top: 11px; width: 111px; height: 52px; border-radius: 0 26px 26px 0; background: #1a1e29; display: flex; flex-direction: column; padding-left: 40px; color: #ddd; }
.rates > div { height: 26px; display: flex; align-items: center; gap: 2px; padding-right: 10px; }
.rates > div + div { border-top: 1px solid #10131b; }
.rates b { margin-left: auto; font: 600 14px "Open Sans"; }
.rates i { font: 12px "Open Sans"; color: #8a8e96; }
.dial { position: relative; width: 74px; height: 74px; }
.pct { position: absolute; left: 15px; top: 14px; font: 300 31px/44px "Open Sans"; color: #ddd; letter-spacing: -.8px; white-space: nowrap; }
.pct small { font-size: 13px; font-weight: 400; }
```
